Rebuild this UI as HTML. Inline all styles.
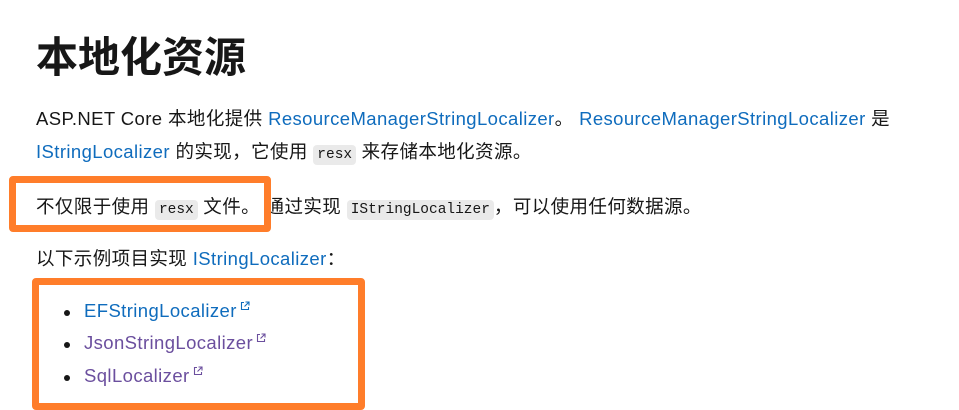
<!DOCTYPE html>
<html><head><meta charset="utf-8"><style>
body{margin:0;width:959px;height:410px;background:#fff;position:relative;overflow:hidden;font-family:"Liberation Sans","Noto Sans CJK SC",sans-serif;color:#171717;}
.l{position:absolute;left:36px;white-space:nowrap;font-size:18.5px;letter-spacing:0.4px;line-height:24px;}
a{color:#0f6cbd;text-decoration:none}
a.v{color:#6b4f9e}
code{font-family:"Liberation Mono","DejaVu Sans Mono",monospace;font-size:14.5px;letter-spacing:0;background:#eaeaea;border-radius:4px;padding:2px 4px;color:#171717}
h1{position:absolute;left:36px;top:27px;margin:0;font-size:42px;line-height:56px;font-weight:bold;font-family:"Noto Sans CJK SC",sans-serif;color:#171717}
.box{position:absolute;border:7px solid #ff7d2a;border-radius:4px;box-sizing:border-box}
.dot{position:absolute;left:64px;width:6px;height:6px;border-radius:50%;background:#171717}
svg{vertical-align:6px;margin-left:3px}
</style></head><body>
<h1>本地化资源</h1>
<div class="l" style="top:107px">ASP.NET Core 本地化提供 <a>ResourceManagerStringLocalizer</a>。 <a>ResourceManagerStringLocalizer</a> 是</div>
<div class="l" style="top:140px"><a>IStringLocalizer</a> 的实现，它使用 <code>resx</code> 来存储本地化资源。</div>
<div class="l" style="top:195px">不仅限于使用 <code>resx</code> 文件。 通过实现 <code>IStringLocalizer</code>，可以使用任何数据源。</div>
<div class="l" style="top:247px">以下示例项目实现 <a>IStringLocalizer</a>：</div>
<div class="dot" style="top:310px"></div>
<div class="dot" style="top:342px"></div>
<div class="dot" style="top:375px"></div>
<div class="l" style="top:299px;left:84px"><a>EFStringLocalizer</a><svg width="10" height="10" viewBox="0 0 10 10" fill="none" stroke="#0f6cbd" stroke-width="1.1"><path d="M4 1.5H1.5v7h7V6M5.5 1h3.5v3.5M9 1L4.5 5.5"/></svg></div>
<div class="l" style="top:331px;left:84px"><a class="v">JsonStringLocalizer</a><svg width="10" height="10" viewBox="0 0 10 10" fill="none" stroke="#6b4f9e" stroke-width="1.1"><path d="M4 1.5H1.5v7h7V6M5.5 1h3.5v3.5M9 1L4.5 5.5"/></svg></div>
<div class="l" style="top:364px;left:84px"><a class="v">SqlLocalizer</a><svg width="10" height="10" viewBox="0 0 10 10" fill="none" stroke="#6b4f9e" stroke-width="1.1"><path d="M4 1.5H1.5v7h7V6M5.5 1h3.5v3.5M9 1L4.5 5.5"/></svg></div>
<div class="box" style="left:9px;top:176px;width:262px;height:56px"></div>
<div class="box" style="left:32px;top:278px;width:333px;height:132px"></div>
</body></html>
